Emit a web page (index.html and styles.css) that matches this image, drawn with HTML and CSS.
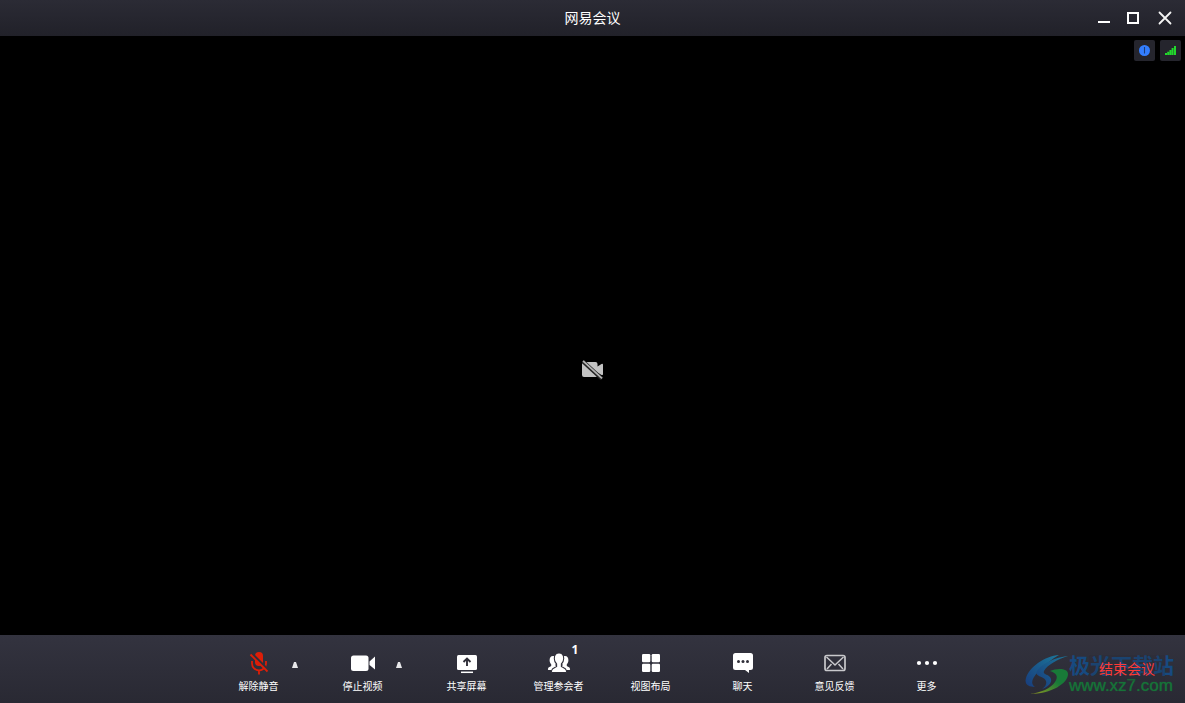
FILE: index.html
```html
<!DOCTYPE html>
<html lang="zh-CN">
<head>
<meta charset="utf-8">
<title>网易会议</title>
<link rel="stylesheet" href="styles.css">
</head>
<body>
<header class="titlebar">
  <h1 class="title">网易会议</h1>
  <div class="window-controls">
    <button class="win-btn" aria-label="最小化"><svg width="14" height="14" viewBox="0 0 14 14"><path d="M2 11h12" stroke="#fff" stroke-width="2"/></svg></button>
    <button class="win-btn" aria-label="最大化"><svg width="14" height="14" viewBox="0 0 14 14"><path d="M1 2h10v10H1z" fill="none" stroke="#fff" stroke-width="2"/></svg></button>
    <button class="win-btn" aria-label="关闭"><svg width="14" height="14" viewBox="0 0 14 14"><path d="M1.500 1.500l11 11M12.500 1.500l-11 11" stroke="#f4f4f4" stroke-width="1.800" stroke-linecap="round"/></svg></button>
  </div>
</header>

<main class="stage">
  <div class="status">
    <button class="status-btn" aria-label="会议信息"><svg width="11" height="11" viewBox="0 0 11 11"><circle cx="5.500" cy="5.500" r="5.500" fill="#337eff"/><path d="M5.500 2v6.500" stroke="#1c3c78" stroke-width="1.100"/></svg></button>
    <button class="status-btn" aria-label="网络状态"><svg width="11" height="11" viewBox="0 0 11 11" fill="#22d92c"><path d="M0 8h2v2H0zM2.200 6.800h2V10h-2zM4.400 5h2v5h-2zM6.600 3h2v7h-2zM9 1h2v9H9z"/></svg></button>
  </div>
  <svg class="camera-off" width="22" height="20" viewBox="0 0 22 20"><path d="M2.500 2h11a2 2 0 0 1 2 2v2.500L19.500 4q1.500-.6 1.500.7v9.600q0 1.200-1.500.6l-4-2.500v2.600a2 2 0 0 1-2 2H2a2 2 0 0 1-2-2V4.500A2.500 2.500 0 0 1 2.500 2z" fill="#c3c3c3"/><path d="M1 1.500l19 17.500" stroke="#222" stroke-width="3.800"/><path d="M1 .8l19 17.500" stroke="#b5b5b5" stroke-width="1.800"/></svg>
</main>

<footer class="toolbar">
  <nav class="tools">
    <div class="tool-group">
      <button class="tool"><svg class="icon" width="24" height="24" viewBox="0 0 24 24"><rect x="8" y="1" width="8" height="14" rx="4" fill="#dc1e08"/><path d="M5 10v2.500a7 7 0 0 0 14 0V10M12 19.500V23.500" fill="none" stroke="#dc1e08" stroke-width="1.800"/><path d="M4.500 2.500l17 17" stroke="#302f39" stroke-width="2.800"/><path d="M3.500 3.500l17 17" stroke="#dc1e08" stroke-width="1.900"/></svg><span>解除静音</span></button>
      <button class="caret" aria-label="音频选项"><svg width="6" height="6" viewBox="0 0 6 6"><path d="M2 0h2l2 6H0z" fill="#e8e8ea"/></svg></button>
    </div>
    <div class="tool-group">
      <button class="tool"><svg class="icon" width="24" height="24" viewBox="0 0 24 24"><rect x="0" y="4.500" width="17.500" height="15.500" rx="2.500" fill="#fff"/><path d="M18.500 10.500L24 5.500v13l-5.500-4.500z" fill="#fff"/></svg><span>停止视频</span></button>
      <button class="caret" aria-label="视频选项"><svg width="6" height="6" viewBox="0 0 6 6"><path d="M2 0h2l2 6H0z" fill="#e8e8ea"/></svg></button>
    </div>
    <button class="tool"><svg class="icon" width="24" height="24" viewBox="0 0 24 24"><rect x="2" y="4" width="20" height="15" rx="1.500" fill="#fff"/><path d="M6 21.300h12" stroke="#fff" stroke-width="1.500"/><path d="M12 15V8.500M8.500 11L12 7.500l3.500 3.500" fill="none" stroke="#302f39" stroke-width="1.900"/></svg><span>共享屏幕</span></button>
    <button class="tool"><svg class="icon" width="24" height="24" viewBox="0 0 24 24" fill="#fff"><path d="M6 5c2.500 0 4 1.700 4 4.300 0 2-.8 3.200-1.500 4v1.500l3 2V19H2c-.9 0-1.300-.6-1-1.300.4-1.600 2.400-1.900 3.200-2.600v-1.800C3.200 12.300 2.600 11 2.600 9.300 2.600 6.700 3.600 5 6 5z"/><path d="M18 5c2.400 0 3.400 1.700 3.400 4.300 0 1.700-.6 3-1.600 4v1.800c.8.700 2.800 1 3.200 2.600.3.700-.1 1.300-1 1.300h-9.500v-2.200l3-2v-1.500c-.7-.8-1.500-2-1.500-4C14 6.700 15.500 5 18 5z"/><path d="M12 2c3 0 4.700 2.100 4.700 5.500 0 2.600-1.200 4.500-2.300 5.500v2.600c1.400 1 4.600 1.600 5.200 4.400.2 1-.4 1.600-1.400 1.600H5.800c-1 0-1.600-.6-1.400-1.600.6-2.800 3.800-3.400 5.200-4.400V13c-1.100-1-2.300-2.900-2.300-5.500C7.300 4.100 9 2 12 2z" stroke="#302f39" stroke-width="1.100"/></svg><span>管理参会者</span><b class="count">1</b></button>
    <button class="tool"><svg class="icon" width="24" height="24" viewBox="0 0 24 24" fill="#fff"><rect x="3" y="3" width="8.300" height="8.300" rx="1.200"/><rect x="12.700" y="3" width="8.300" height="8.300" rx="1.200"/><rect x="3" y="12.700" width="8.300" height="8.300" rx="1.200"/><rect x="12.700" y="12.700" width="8.300" height="8.300" rx="1.200"/></svg><span>视图布局</span></button>
    <button class="tool"><svg class="icon" width="24" height="24" viewBox="0 0 24 24"><path d="M4.500 2h15A2.500 2.500 0 0 1 22 4.500v12a2.500 2.500 0 0 1-2.500 2.500H18v3l-4-3H4.500A2.500 2.500 0 0 1 2 16.500v-12A2.500 2.500 0 0 1 4.500 2z" fill="#fff"/><g fill="#302f39"><circle cx="7.500" cy="10.500" r="1.500"/><circle cx="12" cy="10.500" r="1.500"/><circle cx="16.500" cy="10.500" r="1.500"/></g></svg><span>聊天</span></button>
    <button class="tool"><svg class="icon" width="24" height="24" viewBox="0 0 24 24" fill="none" stroke="#c9c9cc" stroke-width="1.500"><rect x="2" y="4.500" width="20" height="15" rx="2" stroke-width="1.700"/><path d="M3.500 6l8.500 8 8.500-8M4 18l4.500-5M20 18l-4.500-5"/></svg><span>意见反馈</span></button>
    <button class="tool"><svg class="icon" width="24" height="24" viewBox="0 0 24 24" fill="#fff"><circle cx="4" cy="12" r="2.100"/><circle cx="12" cy="12" r="2.100"/><circle cx="20" cy="12" r="2.100"/></svg><span>更多</span></button>
  </nav>
  <div class="watermark">
    <svg width="44" height="42" viewBox="0 0 44 42"><defs><linearGradient id="blue" x1="0" y1="1" x2="1" y2="0"><stop offset="0" stop-color="#193c7c"/><stop offset="1" stop-color="#1b779b"/></linearGradient><linearGradient id="green" x1="0" y1="1" x2="1" y2="0"><stop offset="0" stop-color="#969a20"/><stop offset=".6" stop-color="#187a38"/></linearGradient></defs><path d="M34 1C20 2 4 13 1 24c-2 7 3 9 9 9-5-3-3-9 3-15C19 11 27 5 34 1z" fill="url(#blue)"/><path d="M43 2C31 3 16 10 12 17c-3 6 8 5 9 10 1 3-1 6-4 8 6-2 10-6 9-10-1-5-9-4-7-8C22 11 33 5 43 2z" fill="url(#blue)"/><path d="M25 17c7-3 18-3 18 3 0 9-16 20-39 20 12-1 22-6 26-12 4-6 1-9-5-11z" fill="url(#green)"/></svg>
    <div class="watermark-text"><span class="mark-name">极光下载站</span><span class="mark-url">www.xz7.com</span></div>
  </div>
  <button class="end">结束会议</button>
</footer>
</body>
</html>
```
FILE: styles.css
```css
* { box-sizing: border-box; }

body {
  margin: 0;
  min-height: 100vh;
  display: flex;
  flex-direction: column;
  background: #000;
  color: #fff;
  font-family: "Noto Sans CJK SC", "Liberation Sans", sans-serif;
}

button {
  margin: 0;
  padding: 0;
  border: 0;
  background: none;
  color: inherit;
  font: inherit;
  cursor: pointer;
}

svg { display: block; }

.titlebar {
  display: grid;
  grid-template-columns: 1fr auto 1fr;
  align-items: center;
  height: 36px;
  padding: 0 13px;
  background: linear-gradient(#2b2b35, #212129);
}

.title {
  grid-column: 2;
  margin: 0;
  padding-bottom: 2px;
  font-size: 14px;
  font-weight: 400;
  line-height: 20px;
}

.window-controls {
  display: flex;
  justify-content: flex-end;
  gap: 17px;
}

.stage {
  flex: 1;
  display: flex;
  align-items: center;
  justify-content: center;
  position: relative;
}

.status {
  position: absolute;
  top: 4px;
  right: 4px;
  display: flex;
  gap: 5px;
}

.status-btn {
  display: grid;
  place-items: center;
  width: 21px;
  height: 21px;
  border-radius: 2px;
  background: #25252d;
}

.camera-off { margin-top: 68px; }

.toolbar {
  position: relative;
  display: flex;
  justify-content: center;
  height: 68px;
  background: linear-gradient(#33333f, #292933);
}

.tools { display: flex; }

.tool-group {
  position: relative;
  padding-right: 12px;
}

.tool {
  position: relative;
  display: flex;
  flex-direction: column;
  align-items: center;
  gap: 3px;
  width: 92px;
  padding-top: 16px;
  font-size: 10px;
  line-height: 16px;
}

.caret {
  position: absolute;
  top: 27px;
  right: 19px;
}

.count {
  position: absolute;
  top: 7px;
  left: 59px;
  font-family: "Open Sans", sans-serif;
  font-size: 12px;
}

.watermark {
  position: absolute;
  right: 11px;
  bottom: 6px;
  display: flex;
  align-items: center;
}

.watermark-text {
  display: flex;
  flex-direction: column;
}

.mark-name {
  color: #174a80;
  font-size: 21px;
  font-weight: 700;
  line-height: 22px;
}

.mark-url {
  color: #177238;
  font-family: "Liberation Sans", sans-serif;
  font-size: 17px;
  line-height: 22px;
  text-shadow: 0 0 1px #177238;
}

.end {
  position: absolute;
  top: 20px;
  right: 20px;
  padding: 3px 10px;
  border-radius: 2px;
  background: rgba(42, 41, 50, 0.2);
  color: #fc3b38;
  font-size: 14px;
  line-height: 20px;
}
```
